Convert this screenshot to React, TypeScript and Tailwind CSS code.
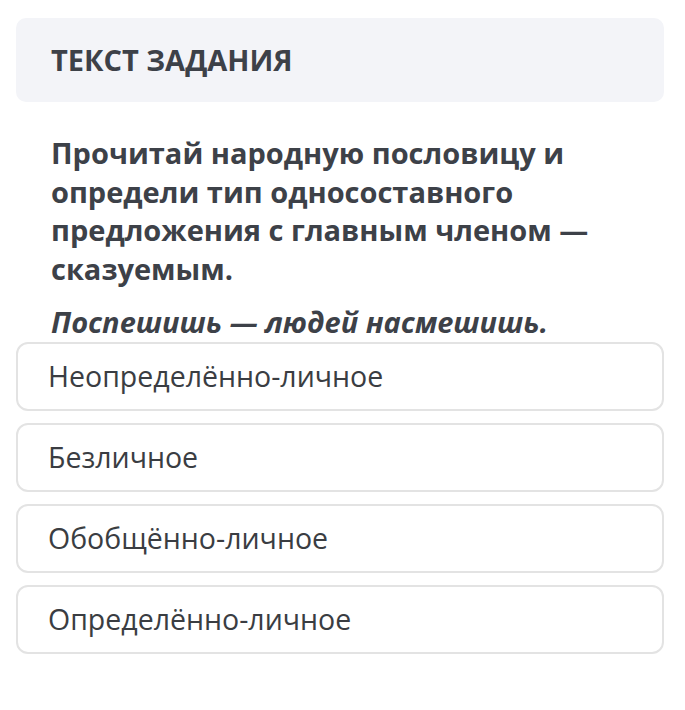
const options = [
  "Неопределённо-личное",
  "Безличное",
  "Обобщённо-личное",
  "Определённо-личное",
];

export default function App() {
  return (
    <div
      className="w-[685px] h-[710px] bg-white pl-4 pr-[21px] pt-[18px] text-[#3d4148]"
      style={{ fontFamily: '"Open Sans", "Noto Sans", sans-serif' }}
    >
      <div className="h-[84px] rounded-[10px] bg-[#f3f4f8] flex items-center px-[35px]">
        <h1 className="text-[29px] font-bold uppercase">Текст задания</h1>
      </div>

      <div className="px-[35px] pt-[32px]">
        <p className="text-[29px] leading-[38.5px] font-bold">
          Прочитай народную пословицу и определи тип односоставного предложения с главным членом — сказуемым.
        </p>
        <p className="mt-[15px] text-[29px] leading-[38px] font-bold italic">
          Поспешишь — людей насмешишь.
        </p>
      </div>

      <div className="flex flex-col gap-[12px] mt-[1px]">
        {options.map((o) => (
          <div
            key={o}
            className="h-[69px] rounded-[12px] border-2 border-[#e3e3e3] flex items-center px-[30px] text-[28.5px] text-[#3a3d42]"
          >
            {o}
          </div>
        ))}
      </div>
    </div>
  );
}
